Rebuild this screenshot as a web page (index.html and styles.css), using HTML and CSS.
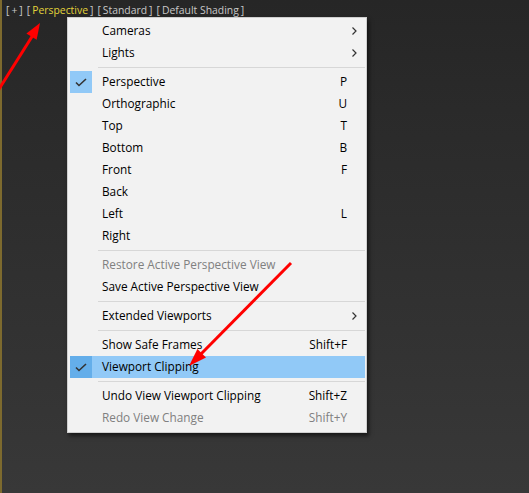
FILE: index.html
```html
<!DOCTYPE html>
<html lang="en">
<head>
    <meta charset="UTF-8">
    <meta name="viewport" content="width=device-width, initial-scale=1.0">
    <title>Viewport Menu</title>
    <link rel="stylesheet" href="styles.css">
</head>
<body>

    <div class="viewport">
        <!-- Etichette del viewport -->
        <div class="labels">
            <span class="br">[</span><span>+</span><span class="br">]</span><span class="br">[</span><span class="active">Perspective</span><span class="br">]</span><span class="br">[</span><span>Standard</span><span class="br">]</span><span class="br">[</span><span>Default Shading</span><span class="br">]</span>
        </div>
    </div>

    <!-- Menu contestuale -->
    <div class="menu">
        <div class="item"><span class="check"></span><span class="text">Cameras</span><span class="key"></span><span class="sub"><svg width="5" height="8" viewBox="0 0 5 8"><path d="M0.5 0.5 L4 4 L0.5 7.5" fill="none" stroke="#333" stroke-width="1.2"/></svg></span></div>
        <div class="item"><span class="check"></span><span class="text">Lights</span><span class="key"></span><span class="sub"><svg width="5" height="8" viewBox="0 0 5 8"><path d="M0.5 0.5 L4 4 L0.5 7.5" fill="none" stroke="#333" stroke-width="1.2"/></svg></span></div>
        <div class="sep"></div>
        <div class="item"><span class="check on"><svg width="12" height="9" viewBox="0 0 12 9"><path d="M1 4.5 L4 7.5 L11 1" fill="none" stroke="#333" stroke-width="1.6"/></svg></span><span class="text">Perspective</span><span class="key">P</span><span class="sub"></span></div>
        <div class="item"><span class="check"></span><span class="text">Orthographic</span><span class="key">U</span><span class="sub"></span></div>
        <div class="item"><span class="check"></span><span class="text">Top</span><span class="key">T</span><span class="sub"></span></div>
        <div class="item"><span class="check"></span><span class="text">Bottom</span><span class="key">B</span><span class="sub"></span></div>
        <div class="item"><span class="check"></span><span class="text">Front</span><span class="key">F</span><span class="sub"></span></div>
        <div class="item"><span class="check"></span><span class="text">Back</span><span class="key"></span><span class="sub"></span></div>
        <div class="item"><span class="check"></span><span class="text">Left</span><span class="key">L</span><span class="sub"></span></div>
        <div class="item"><span class="check"></span><span class="text">Right</span><span class="key"></span><span class="sub"></span></div>
        <div class="sep"></div>
        <div class="item disabled"><span class="check"></span><span class="text">Restore Active Perspective View</span><span class="key"></span><span class="sub"></span></div>
        <div class="item"><span class="check"></span><span class="text">Save Active Perspective View</span><span class="key"></span><span class="sub"></span></div>
        <div class="sep"></div>
        <div class="item"><span class="check"></span><span class="text">Extended Viewports</span><span class="key"></span><span class="sub"><svg width="5" height="8" viewBox="0 0 5 8"><path d="M0.5 0.5 L4 4 L0.5 7.5" fill="none" stroke="#333" stroke-width="1.2"/></svg></span></div>
        <div class="sep"></div>
        <div class="item"><span class="check"></span><span class="text">Show Safe Frames</span><span class="key">Shift+F</span><span class="sub"></span></div>
        <div class="item hover"><span class="check on"><svg width="12" height="9" viewBox="0 0 12 9"><path d="M1 4.5 L4 7.5 L11 1" fill="none" stroke="#333" stroke-width="1.6"/></svg></span><span class="text">Viewport Clipping</span><span class="key"></span><span class="sub"></span></div>
        <div class="sep"></div>
        <div class="item"><span class="check"></span><span class="text">Undo View Viewport Clipping</span><span class="key">Shift+Z</span><span class="sub"></span></div>
        <div class="item disabled"><span class="check"></span><span class="text">Redo View Change</span><span class="key">Shift+Y</span><span class="sub"></span></div>
    </div>

    <!-- Frecce rosse di annotazione -->
    <svg class="arrows" width="529" height="493" viewBox="0 0 529 493">
        <line x1="-6" y1="97" x2="33" y2="35" stroke="#f00" stroke-width="3"/>
        <polygon points="40,23 36.6,39.8 26.4,33.4" fill="#f00"/>
        <line x1="291" y1="263" x2="200" y2="355" stroke="#f00" stroke-width="3"/>
        <polygon points="189,366 206,357.4 197.4,349" fill="#f00"/>
    </svg>

</body>
</html>
```

FILE: styles.css
```css
body {
    margin: 0;
    padding: 0;
    width: 529px;
    height: 493px;
    overflow: hidden;
    font-family: 'Open Sans', sans-serif;
    background: linear-gradient(#262626, #383838);
}

.viewport {
    height: 493px;
    border-left: 2px solid #7d6a2e;
    box-sizing: border-box;
}

.labels {
    padding: 2px 0 0 2px;
    font-size: 10.4px;
    line-height: 16px;
    color: #c8c8c8;
    white-space: nowrap;
}

.labels .br {
    margin: 0 2px;
}

.labels .active {
    color: #e3d33a;
}

.menu {
    position: absolute;
    left: 67px;
    top: 17px;
    width: 295px;
    padding: 2px 1px 3px 2px;
    background-color: #f2f2f2;
    border: 1px solid #cfcfcf;
    box-shadow: 2px 3px 4px rgba(0, 0, 0, 0.55);
    font-size: 11.8px;
}

.item {
    display: grid;
    grid-template-columns: 22px 1fr auto 18px;
    height: 22px;
    line-height: 20px;
    align-items: center;
    color: #000;
}

.item .text,
.item .key {
    padding-bottom: 2px;
}

.item .text {
    padding-left: 10px;
    white-space: nowrap;
}

.item .key {
    text-align: right;
}

.item .sub {
    display: flex;
    align-items: center;
    padding-left: 5px;
}

.check {
    height: 22px;
    display: flex;
    align-items: center;
    justify-content: center;
}

.check.on {
    background-color: #91c9f7;
}

.item.hover {
    background-color: #91c9f7;
}

.item.hover .check.on {
    background-color: #64aeea;
}

.item.disabled {
    color: #808080;
}

.sep {
    height: 1px;
    margin: 3px 0 3px 28px;
    background-color: #d7d7d7;
}

.arrows {
    position: absolute;
    left: 0;
    top: 0;
    pointer-events: none;
}
```
